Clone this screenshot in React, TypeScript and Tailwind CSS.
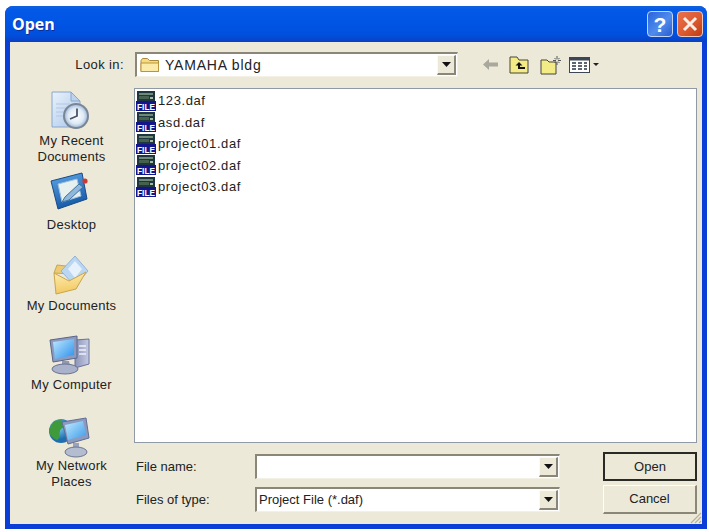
import React from "react";

const UI_TEXT = "font-['Liberation_Sans',Arial,sans-serif] text-[13px] text-[#222]";

function FileIcon() {
  return (
    <svg width="20" height="20" viewBox="0 0 20 20" className="shrink-0 overflow-visible">
      <rect x="1" y="0" width="18" height="10" fill="#1f3540" />
      <rect x="3" y="2" width="14" height="2" fill="#6f8a76" />
      <rect x="3" y="5" width="10" height="3" fill="#46624f" />
      <rect x="14" y="6" width="3" height="2" fill="#a4bba2" />
      <rect x="0" y="10" width="20" height="10" fill="#12168a" />
      <text x="1" y="18.5" fontSize="9" fontWeight="700" fill="#fff" fontFamily="'Liberation Sans',sans-serif" textLength="18" lengthAdjust="spacingAndGlyphs">FILE</text>
    </svg>
  );
}

function RecentIcon() {
  return (
    <svg width="42" height="40" viewBox="0 0 42 40">
      <defs>
        <linearGradient id="rp" x1="0" y1="0" x2="1" y2="1"><stop offset="0" stopColor="#eaf2fb" /><stop offset="1" stopColor="#a8c6ea" /></linearGradient>
        <radialGradient id="rc"><stop offset="0" stopColor="#ffffff" /><stop offset="0.7" stopColor="#dfeaf5" /><stop offset="1" stopColor="#a9c2de" /></radialGradient>
      </defs>
      <path d="M3 1h19l9 9v26H3z" fill="url(#rp)" stroke="#8aa6cc" />
      <path d="M22 1v9h9z" fill="#bcd2ee" stroke="#8aa6cc" />
      <path d="M7 13h14M7 17h11M7 21h9M7 25h8" stroke="#b3c8e2" strokeWidth="1" />
      <circle cx="27" cy="25" r="13" fill="#7a8595" />
      <circle cx="27" cy="25" r="11" fill="url(#rc)" />
      <path d="M28 17.5V25l-7 3" fill="none" stroke="#4a5568" strokeWidth="1.8" />
    </svg>
  );
}

function DesktopIcon() {
  return (
    <svg width="42" height="38" viewBox="0 0 42 38">
      <defs>
        <linearGradient id="dk" x1="0" y1="0" x2="0.3" y2="1"><stop offset="0" stopColor="#5fa6e8" /><stop offset="1" stopColor="#175ba8" /></linearGradient>
      </defs>
      <path d="M2 9 33 1l5 26-29 10z" fill="url(#dk)" stroke="#1b4a86" />
      <path d="M9 12 28 7l4 17-19 6z" fill="#e6f0ee" stroke="#9fc0dc" />
      <path d="M16 25 30 12l4 3-14 13-7 2z" fill="#8fb8dc" stroke="#41709e" />
      <circle cx="36" cy="9" r="2.6" fill="#cf3a30" />
    </svg>
  );
}

function DocumentsIcon() {
  return (
    <svg width="42" height="42" viewBox="0 0 42 42">
      <defs>
        <linearGradient id="mf" x1="0" y1="0" x2="0.2" y2="1"><stop offset="0" stopColor="#fdeeb4" /><stop offset="1" stopColor="#f3c961" /></linearGradient>
      </defs>
      <path d="M5 19 8 11l9 1 5 8z" fill="#eecb72" stroke="#c7a653" />
      <path d="M12 17 26 2l13 15-13 15z" fill="#b9d6f2" stroke="#92b3d6" />
      <path d="M19 15 26 7l7 8-7 9z" fill="#e6f1fc" />
      <path d="M5 19 20 27 37 18 27 35 7 40z" fill="url(#mf)" stroke="#c9a44e" />
    </svg>
  );
}

function ComputerIcon() {
  return (
    <svg width="42" height="40" viewBox="0 0 42 40">
      <defs>
        <linearGradient id="sc" x1="0" y1="0" x2="1" y2="1"><stop offset="0" stopColor="#bfe8ff" /><stop offset="1" stopColor="#2a90ea" /></linearGradient>
        <linearGradient id="tw" x1="0" y1="0" x2="1" y2="0"><stop offset="0" stopColor="#8b93b8" /><stop offset="1" stopColor="#c5cbe4" /></linearGradient>
      </defs>
      <path d="M26 5 40 4v25l-14 4z" fill="url(#tw)" stroke="#6a7298" />
      <path d="M30 11h7M30 15h7M30 19h7" stroke="#eef1f8" strokeWidth="1.5" />
      <path d="M1 5 28 1v22L4 27z" fill="#8d9ac0" stroke="#5a6688" />
      <path d="M4 7 25 4v16L6 24z" fill="url(#sc)" />
      <path d="M13 26h7l1 5h-8z" fill="#9098b4" />
      <ellipse cx="16" cy="34" rx="13" ry="5" fill="#aab1ca" stroke="#6a7392" />
    </svg>
  );
}

function NetworkIcon() {
  return (
    <svg width="42" height="41" viewBox="0 0 42 41">
      <defs>
        <radialGradient id="gl" cx="0.4" cy="0.35"><stop offset="0" stopColor="#7fd0f0" /><stop offset="1" stopColor="#1f6fb0" /></radialGradient>
        <linearGradient id="sn" x1="0" y1="0" x2="1" y2="1"><stop offset="0" stopColor="#c2ebff" /><stop offset="1" stopColor="#3a9ae8" /></linearGradient>
      </defs>
      <circle cx="12" cy="14" r="12" fill="url(#gl)" />
      <path d="M5 4c6-2 12 0 13 4-2 3-6 2-7 6-1 3 0 8-3 9-5-2-8-6-8-10 1-3 3-6 5-9z" fill="#3f9a3c" />
      <path d="M13 5 37 1l3 20-21 6z" fill="#8d9ac0" stroke="#5f6e94" />
      <path d="M16 8 34 4l3 14-18 5z" fill="url(#sn)" />
      <path d="M24 26h6v6h-6z" fill="#9aa3bd" />
      <ellipse cx="27" cy="35" rx="11" ry="5" fill="#b4bccf" stroke="#6a7592" />
    </svg>
  );
}

function Place({ icon, label, h, gap }: { icon: React.ReactNode; label: React.ReactNode; h: string; gap: string }) {
  return (
    <div className={`flex flex-col items-center ${h}`}>
      {icon}
      <div className={`text-center leading-[16px] tracking-[0.25px] pl-[3px] ${UI_TEXT} ${gap}`}>{label}</div>
    </div>
  );
}

function Arrow() {
  return (
    <svg width="9" height="5" viewBox="0 0 9 5"><path d="M0 0h9L4.5 5z" fill="#111" /></svg>
  );
}

function Combo({ w, children }: { w: string; children?: React.ReactNode }) {
  return (
    <div className={`${w} h-[25px] flex items-stretch bg-white border-t-2 border-l-2 border-[#8a8778] border-r border-b border-r-[#f3f1e6] border-b-[#f3f1e6] pr-[1px]`}>
      <div className={`flex-1 flex items-center min-w-0 ${UI_TEXT}`}>{children}</div>
      <div className="w-[19px] my-[1px] bg-[#ece9d8] border-r-2 border-b-2 border-[#8a8778] border-t border-l border-t-[#fbfaf5] border-l-[#fbfaf5] flex items-center justify-center">
        <Arrow />
      </div>
    </div>
  );
}

export default function App() {
  const files = ["123.daf", "asd.daf", "project01.daf", "project02.daf", "project03.daf"];
  return (
    <div className="w-[709px] h-[532px] bg-white pl-[5px] pr-[2px] pt-[6px] pb-[3px]">
      <div className="w-full h-full flex flex-col rounded-t-[8px] overflow-hidden bg-[#0a3ed6]">
        <div className="h-[36px] shrink-0 flex items-center pl-[7px] pr-[4px] bg-[linear-gradient(180deg,#0f62dc_0%,#0458e8_12%,#0055e5_45%,#0050dd_80%,#0a3fc4_100%)]">
          <div className="flex-1 font-['Open_Sans',sans-serif] font-bold text-[16px] text-white [text-shadow:1px_1px_0_#0a2f9c]">Open</div>
          <div className="w-[26px] h-[26px] rounded-[4px] border border-[#c3d5f2] bg-[linear-gradient(135deg,#2a63dc,#4f8cec_55%,#2a5cd0)] flex items-center justify-center text-white font-bold text-[21px] leading-none font-['Liberation_Sans',sans-serif]">?</div>
          <div className="ml-[4px] w-[26px] h-[26px] rounded-[4px] border border-[#ecc9bc] bg-[linear-gradient(135deg,#e8714e,#dc5a30_55%,#c03c14)] flex items-center justify-center">
            <svg width="16" height="16" viewBox="0 0 16 16"><path d="M2 2l12 12M14 2L2 14" stroke="#fdeee8" strokeWidth="3" /></svg>
          </div>
        </div>
        <div className="relative flex-1 min-h-0 flex flex-col ml-[5px] mr-[5px] mb-[5px] bg-[#ece9d8]">
          <div className="flex h-[46px] shrink-0">
            <div className={`w-[114px] pt-[15px] text-right leading-[16px] tracking-[0.4px] ${UI_TEXT}`}>Look in:</div>
            <div className="pl-[11px] pt-[10px] flex">
              <Combo w="w-[323px]">
                <span className="flex items-center gap-[5px] pl-[3px] text-[14px] tracking-[0.8px]">
                  <svg width="20" height="16" viewBox="0 0 20 16" className="shrink-0">
                    <path d="M1 3.5 2.5 1.5h5l2 2h9v11H1z" fill="#f6dc80" stroke="#a88a3a" />
                    <path d="M1 6h17.5v8.5H1z" fill="#fbeba8" stroke="#b8953e" />
                  </svg>
                  YAMAHA bldg
                </span>
              </Combo>
              <div className="flex items-center h-[25px] ml-[25px] gap-[11px]">
                <svg width="15" height="11" viewBox="0 0 15 11"><path d="M0 5.5 6 0v3.5h9v4H6V11z" fill="#a9a89c" /></svg>
                <svg width="20" height="18" viewBox="0 0 20 18">
                  <path d="M1 4V1h7l2 3h9v13H1z" fill="#f3ec86" stroke="#45453a" />
                  <path d="M10 6 6.5 9.5H9V13h7v-2h-5V9.5h2.5z" fill="#111" />
                </svg>
                <svg width="21" height="20" viewBox="0 0 21 20">
                  <path d="M1 7V5h6l2 2h7v12H1z" fill="#f3ec86" stroke="#45453a" />
                  <path d="M17 1v3M17 7v3M13 5.5h3M18 5.5h3M14.5 3l1.5 1.5M19.5 3 18 4.5M14.5 8 16 6.5M19.5 8 18 6.5" stroke="#555" strokeWidth="1" />
                </svg>
                <div className="flex items-center gap-[3px] -ml-[3px]">
                  <svg width="21" height="16" viewBox="0 0 21 16">
                    <rect x="0.5" y="0.5" width="20" height="15" fill="#fff" stroke="#3c4654" />
                    <rect x="0.5" y="0.5" width="20" height="3" fill="#3c4654" />
                    <path d="M3 6h4M9 6h4M15 6h3M3 9h4M9 9h4M15 9h3M3 12h4M9 12h4M15 12h3" stroke="#2a3444" strokeWidth="1.6" />
                  </svg>
                  <svg width="6" height="3" viewBox="0 0 6 3"><path d="M0 0h6L3 3z" fill="#222" /></svg>
                </div>
              </div>
            </div>
          </div>

          <div className="flex-1 min-h-0 flex">
            <div className="w-[122px] shrink-0 flex flex-col pt-[3px] pr-[2px]">
              <Place h="h-[81px]" gap="mt-[2px]" icon={<RecentIcon />} label={<>My Recent<br />Documents</>} />
              <Place h="h-[82px]" gap="mt-[7px]" icon={<DesktopIcon />} label="Desktop" />
              <Place h="h-[81px]" gap="mt-[2px]" icon={<DocumentsIcon />} label="My Documents" />
              <Place h="h-[82px]" gap="mt-[2px]" icon={<ComputerIcon />} label="My Computer" />
              <Place h="h-[78px]" gap="mt-[0px]" icon={<NetworkIcon />} label={<>My Network<br />Places</>} />
            </div>
            <div className="flex-1 min-w-0 flex flex-col pl-[2px] pr-[5px]">
              <div className="h-[355px] shrink-0 bg-white border border-[#8f9aa6] pt-[1px] pl-[1px]">
                {files.map((f) => (
                  <div key={f} className={`flex items-center h-[21.5px] ${UI_TEXT}`}>
                    <FileIcon />
                    <span className="ml-[2px] tracking-[0.6px]">{f}</span>
                  </div>
                ))}
              </div>
              <div className="flex mt-[11px]">
                <div className="flex-1 flex flex-col">
                  <div className={`flex items-center h-[25px] ${UI_TEXT}`}>
                    <div className="w-[121px] pl-[2px]">File name:</div>
                    <Combo w="w-[305px]" />
                  </div>
                  <div className={`flex items-center h-[25px] mt-[8px] ${UI_TEXT}`}>
                    <div className="w-[121px] pl-[2px]">Files of type:</div>
                    <Combo w="w-[305px]"><span className="pl-[2px]">Project File (*.daf)</span></Combo>
                  </div>
                </div>
                <div className="w-[94px] flex flex-col -mt-[2px]">
                  <button className={`h-[29px] bg-[#ece9d8] border-2 border-[#2a2a24] ${UI_TEXT}`}>Open</button>
                  <button className={`h-[29px] mt-[4px] bg-[#ece9d8] border border-white border-r-2 border-b-2 border-r-[#8a8778] border-b-[#8a8778] ${UI_TEXT}`}>Cancel</button>
                </div>
              </div>
            </div>
          </div>
          <svg width="12" height="12" viewBox="0 0 12 12" className="absolute right-0 bottom-0">
            <path d="M11 1 1 11M11 5 5 11M11 9 9 11" stroke="#b5b19c" strokeWidth="1.2" />
          </svg>
        </div>
      </div>
    </div>
  );
}
